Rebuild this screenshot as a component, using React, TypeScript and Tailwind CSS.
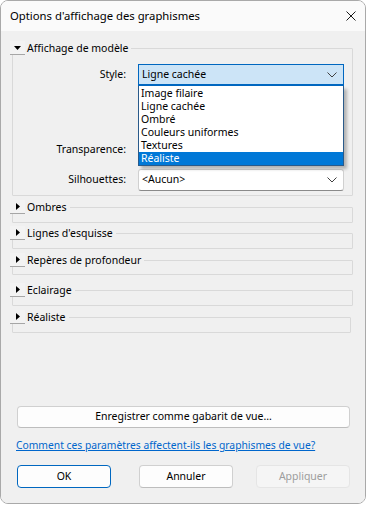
import React from "react";

const font = { fontFamily: '"Noto Sans", "Open Sans", sans-serif' };

function Expander({ open, label }: { open?: boolean; label: string }) {
  return (
    <div className="absolute top-0 left-0 flex h-[14px] items-center bg-[#f0f0f0] pr-[3px]">
      <div className="flex h-[14px] w-[15px] items-center justify-center border-b border-[#a6a6a6] bg-[#f3f3f3]">
        {open ? (
          <svg width="7" height="4" viewBox="0 0 7 4">
            <path d="M0 0H7L3.5 4Z" fill="#000" />
          </svg>
        ) : (
          <svg width="4" height="7" viewBox="0 0 4 7">
            <path d="M0 0V7L4 3.5Z" fill="#000" />
          </svg>
        )}
      </div>
      <span className="ml-[2px] text-[10.5px] leading-[14px] text-black">{label}</span>
    </div>
  );
}

function Group({
  label,
  h,
  mt,
  w = "w-[341px]",
  open,
  children,
}: {
  label: string;
  h: string;
  mt: string;
  w?: string;
  open?: boolean;
  children?: React.ReactNode;
}) {
  return (
    <div className={`relative ${mt}`}>
      <div className={`ml-[2px] mt-[7px] ${w} ${h} border border-[#d9d9d9] rounded-[1px]`}>{children}</div>
      <Expander open={open} label={label} />
    </div>
  );
}

function Chevron() {
  return (
    <svg width="10" height="6" viewBox="0 0 10 6" className="mr-[6px]">
      <path d="M0.5 0.5L5 5L9.5 0.5" fill="none" stroke="#404040" strokeWidth="1" />
    </svg>
  );
}

export default function App() {
  const items = ["Image filaire", "Ligne cachée", "Ombré", "Couleurs uniformes", "Textures", "Réaliste"];
  return (
    <div className="w-[367px] h-[505px] bg-white" style={font}>
      <div className="flex h-[504px] w-[366px] flex-col overflow-hidden rounded-[8px] border border-[#a9a9a9]">
        <div className="flex h-[30px] items-center justify-between bg-[#fafafa] pl-[9px]">
          <span className="text-[11.3px] text-black">Options d'affichage des graphismes</span>
          <svg width="10" height="10" viewBox="0 0 10 10" className="mr-[9px]">
            <path d="M0.5 0.5L9.5 9.5M9.5 0.5L0.5 9.5" stroke="#1a1a1a" strokeWidth="1" />
          </svg>
        </div>
        <div className="flex flex-1 flex-col bg-[#f0f0f0] pl-[9px] pt-[10px]">
          <Group label="Affichage de modèle" h="h-[148px]" mt="mt-0" open>
            <div className="flex flex-col pt-[15px]">
              <div className="relative flex items-center">
                <span className="w-[113px] text-right text-[10.5px]">Style:</span>
                <div className="ml-[12px] flex h-[22px] w-[206px] items-center justify-between border border-[#0067c0] border-b-2 bg-[#cce4f7] pl-[3px]">
                  <span className="text-[10.5px]">Ligne cachée</span>
                  <Chevron />
                </div>
                <div className="absolute left-[125px] top-[22px] z-10 w-[206px] border border-t-0 border-[#2a5a8a] bg-white pt-[1px] shadow-[3px_3px_3px_rgba(0,0,0,0.25)]">
                  {items.map((it) => (
                    <div
                      key={it}
                      className={`h-[13px] pl-[2px] text-[10.5px] leading-[13px] ${
                        it === "Réaliste" ? "bg-[#0078d7] text-white" : "text-black"
                      }`}
                    >
                      {it}
                    </div>
                  ))}
                </div>
              </div>
              <div className="mt-[53px] flex h-[22px] items-center">
                <span className="w-[113px] text-right text-[10.5px]">Transparence:</span>
              </div>
              <div className="mt-[8px] flex items-center">
                <span className="w-[113px] text-right text-[10.5px]">Silhouettes:</span>
                <div className="ml-[12px] flex h-[22px] w-[206px] items-center justify-between rounded-[3px] border border-[#d0d0d0] border-b-[#8a8a8a] bg-white pl-[3px]">
                  <span className="text-[10.5px]">&lt;Aucun&gt;</span>
                  <Chevron />
                </div>
              </div>
            </div>
          </Group>
          <Group label="Ombres" h="h-[16px]" mt="mt-[4px]" />
          <Group label="Lignes d'esquisse" h="h-[16px]" mt="mt-[3px]" />
          <Group label="Repères de profondeur" h="h-[15px]" mt="mt-[4px]" />
          <Group label="Eclairage" h="h-[16px]" mt="mt-[8px]" />
          <Group label="Réaliste" h="h-[16px]" mt="mt-[4px]" w="w-[339px]" />

          <div className="mt-auto flex flex-col pb-[15px] pl-[7px]">
            <div className="flex h-[22px] w-[333px] items-center justify-center rounded-[4px] border border-[#d0d0d0] border-b-[#bdbdbd] bg-[#fdfdfd] text-[10.5px]">
              Enregistrer comme gabarit de vue...
            </div>
            <a className="mt-[10px] -ml-[1px] text-[10.3px] leading-[15px] text-[#0066cc] underline">
              Comment ces paramètres affectent-ils les graphismes de vue?
            </a>
            <div className="mt-[12px] flex items-center">
              <div className="flex h-[23px] w-[94px] items-center justify-center rounded-[4px] border border-[#0067c0] bg-[#fdfdfd] text-[10.5px]">
                OK
              </div>
              <div className="ml-[28px] flex h-[23px] w-[94px] items-center justify-center rounded-[4px] border border-[#d0d0d0] border-b-[#bdbdbd] bg-[#fdfdfd] text-[10.5px]">
                Annuler
              </div>
              <div className="ml-[23px] flex h-[23px] w-[94px] items-center justify-center rounded-[4px] border border-[#e5e5e5] bg-[#f5f5f5] text-[10.5px] text-[#9d9d9d]">
                Appliquer
              </div>
            </div>
          </div>
        </div>
      </div>
    </div>
  );
}
